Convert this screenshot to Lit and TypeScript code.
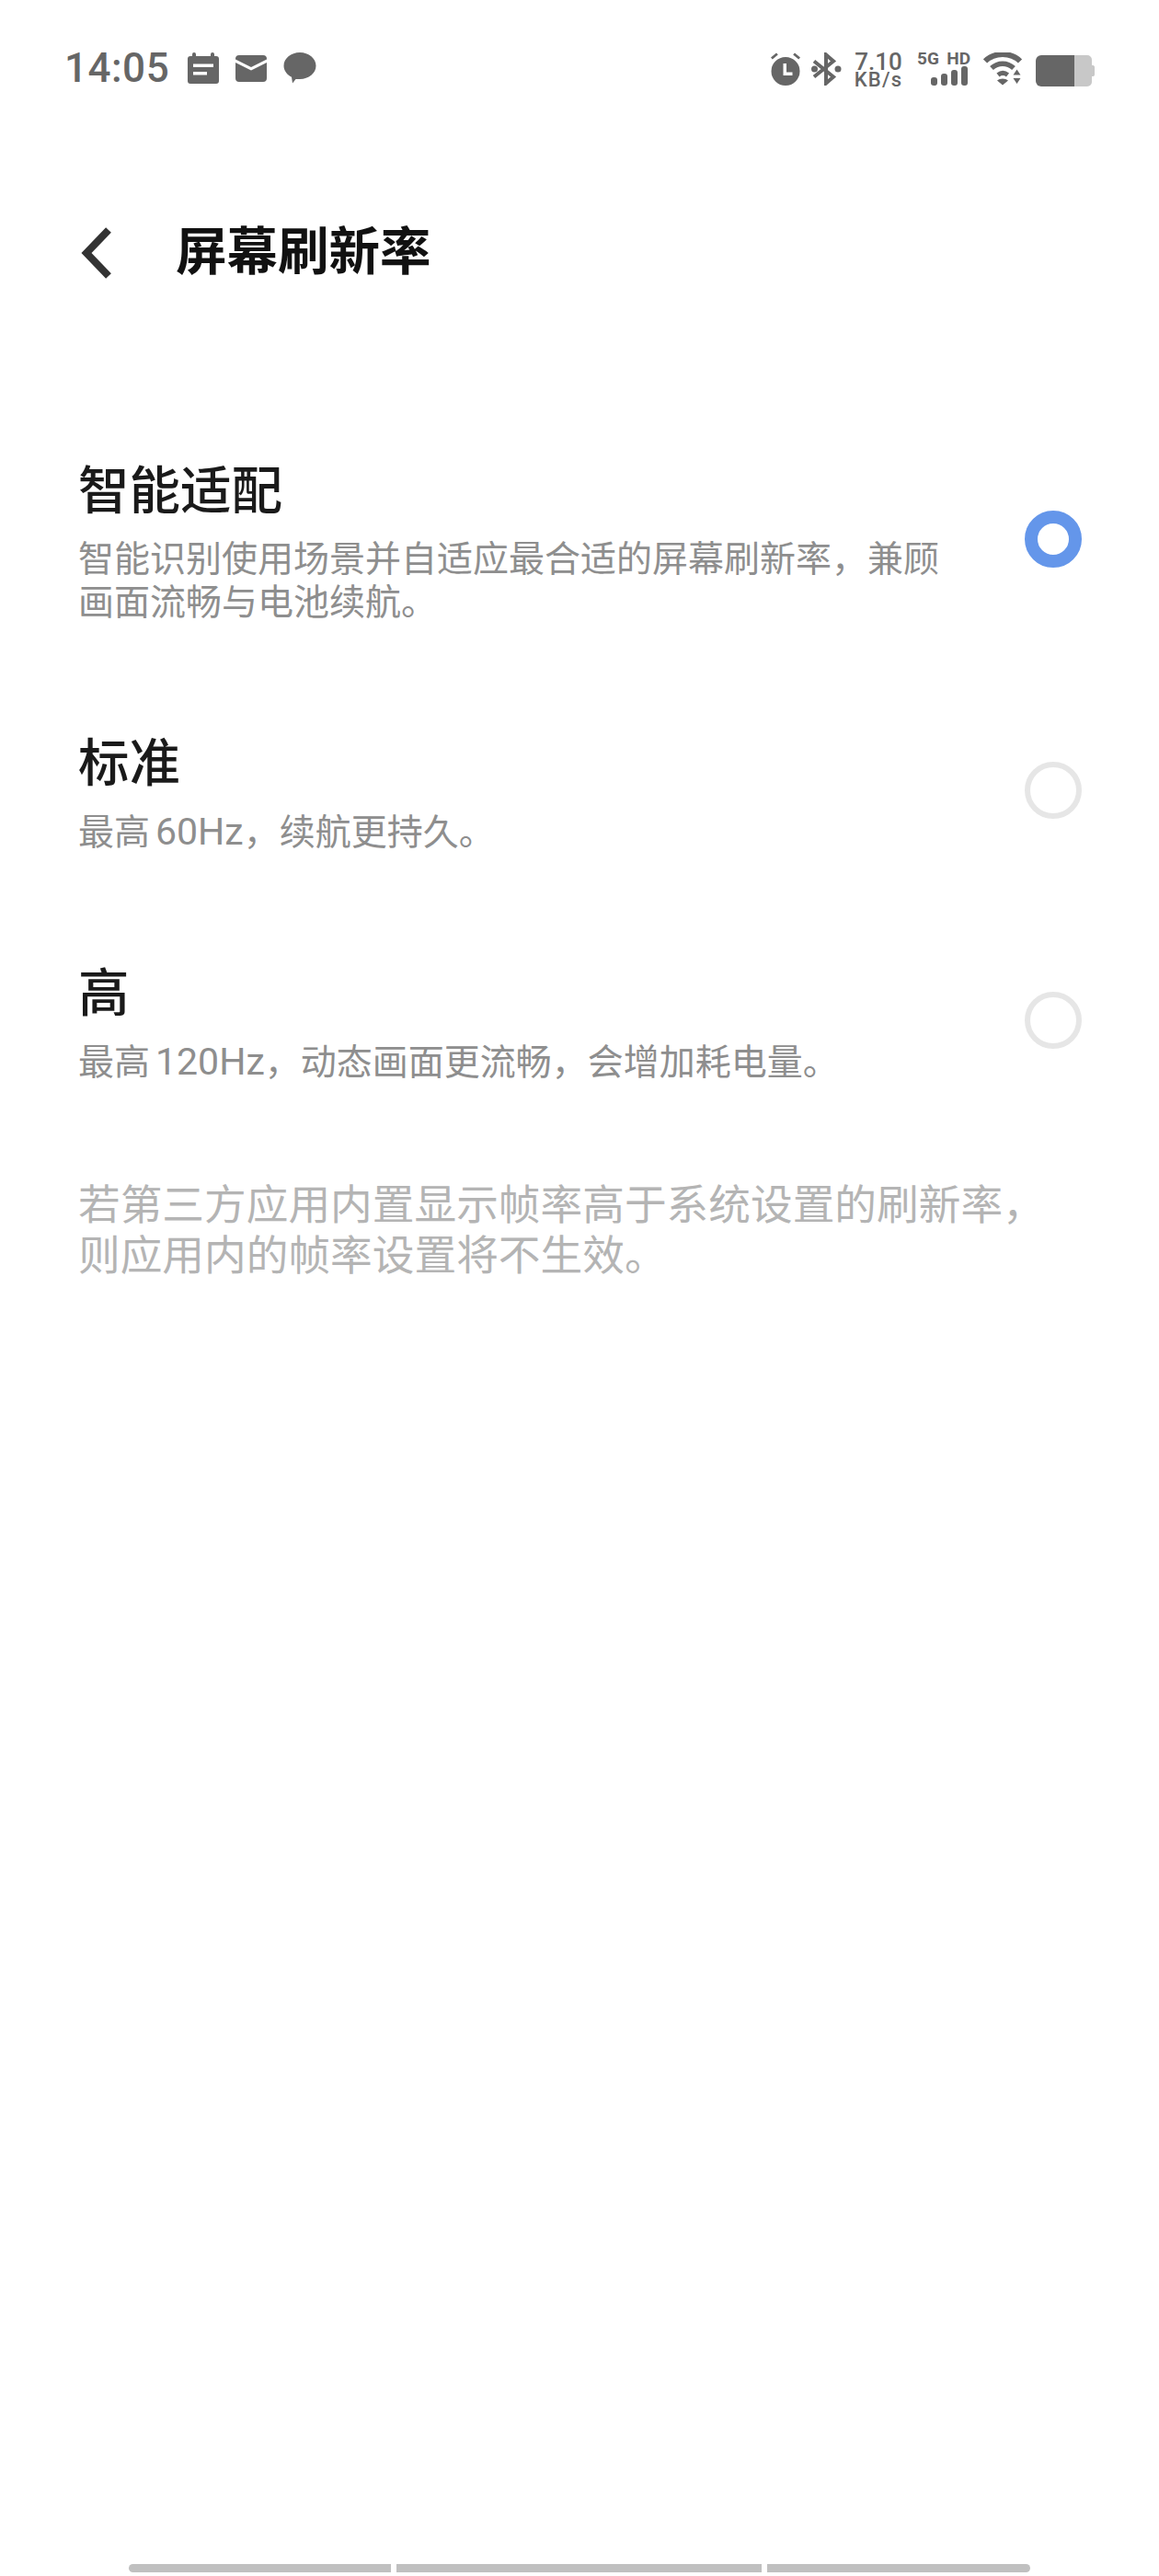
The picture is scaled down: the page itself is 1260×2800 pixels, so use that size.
import { LitElement, html, css } from "lit";
import { customElement } from "lit/decorators.js";

const lat = (t: string) => html`<span class="lat">${t}</span>`;

const options = [
  { title: "智能适配", desc: [html`智能识别使用场景并自适应最合适的屏幕刷新率，兼顾`, html`画面流畅与电池续航。`], on: true },
  { title: "标准", desc: [html`最高${lat("60Hz")}，续航更持久。`], on: false },
  { title: "高", desc: [html`最高${lat("120Hz")}，动态画面更流畅，会增加耗电量。`], on: false },
];

@customElement("app-root")
export class AppRoot extends LitElement {
  static styles = css`
    :host { display: block; background: #fff; font-family: Roboto, "Noto Sans CJK SC", sans-serif; }
    .page { min-height: 2800px; display: flex; flex-direction: column; box-sizing: border-box; }
    .status { display: flex; align-items: flex-start; height: 100px; box-sizing: border-box; padding: 57px 70px 0 70px; color: #666; }
    .time { font-size: 44px; font-weight: 500; line-height: 34px; letter-spacing: 0.5px; width: 133px; }
    .status svg { display: block; flex: none; fill: #666; }
    .left { display: flex; gap: 16px; }
    .spacer { flex: 1; }
    .speed { width: 50px; margin-left: 15px; display: flex; flex-direction: column; font-weight: 500; align-items: center; }
    .speed b { font-weight: 500; font-size: 26px; line-height: 20px; }
    .speed i { font-style: normal; font-size: 22px; line-height: 19px; letter-spacing: 1.2px; white-space: nowrap; }
    .net { width: 58px; margin-left: 17px; display: flex; flex-direction: column; }
    .net-t { display: flex; justify-content: space-between; font-weight: 700; font-size: 19px; line-height: 14px; height: 15px; }
    .header { display: flex; align-items: center; height: 94px; margin-top: 128px; padding-left: 87px; }
    .back { display: block; flex: none; }
    .title { margin-left: 68px; font-size: 55.500px; font-weight: 700; line-height: 94px; color: #111; }
    .list { display: flex; flex-direction: column; gap: 111px; margin-top: 178px; padding: 0 84px 0 85px; }
    .row { display: flex; align-items: center; }
    .text { flex: 1; display: flex; flex-direction: column; gap: 15px; padding-bottom: 6px; }
    .opt { font-size: 55.500px; line-height: 70px; font-weight: 500; color: #1a1a1a; }
    .desc { font-size: 39px; line-height: 47px; color: #8e8e8e; }
    .lat { font-size: 41px; font-weight: 400; margin-left: 6px; }
    .radio { flex: none; width: 62px; height: 62px; margin-bottom: 14px; border-radius: 50%; box-sizing: border-box; border: 6px solid #e6e6e6; }
    .radio.on { border: 14px solid #6496ea; }
    .note { margin: 98px 0 0 85px; font-size: 45.700px; line-height: 55px; color: #b4b4b4; }
    .nav { margin-top: auto; display: flex; gap: 6px; padding: 0 140px 4px; height: 9px; }
    .nav div { background: #c0c0c0; height: 9px; }
    .nav .a { width: 285px; border-radius: 5px 0 0 5px; }
    .nav .b { width: 397px; }
    .nav .c { width: 286px; border-radius: 0 5px 5px 0; }
  `;

  private statusLeft() {
    return html`<div class="left">
      <svg width="36" height="34" viewBox="0 0 36 34"><path fill-rule="evenodd" d="M8 0a2 2 0 0 1 2 2v2h16V2a2 2 0 0 1 4 0v2h2a3 3 0 0 1 3 3v24a3 3 0 0 1-3 3H4a3 3 0 0 1-3-3V7a3 3 0 0 1 3-3h2V2a2 2 0 0 1 2-2zM7 12.500v3.500h22v-3.500zM7 21v3.500h15V21z"/></svg>
      <svg width="36" height="34" viewBox="0 0 36 34" style="margin-top:2px"><path d="M5 1h26a4 4 0 0 1 4 4v.5L18 14 1 5.500V5a4 4 0 0 1 4-4zM1 9l17 8.500L35 9v17a4 4 0 0 1-4 4H5a4 4 0 0 1-4-4z"/></svg>
      <svg width="36" height="34" viewBox="0 0 36 34" style="margin-left:1px"><path d="M18 0c9.700 0 17.500 6.500 17.500 14.500S27.700 29 18 29c-1.500 0-3 .2-4.500 0L10 33.500 9 26.800C4 24.200.5 19.700.5 14.500.5 6.500 8.300 0 18 0z"/></svg>
    </div>`;
  }

  private statusRight() {
    return html`
      <svg width="34" height="36" viewBox="0 0 34 36"><path fill-rule="evenodd" d="M17 5a15.500 15.500 0 1 1 0 31 15.500 15.500 0 0 1 0-31zM14.500 12v13h10v-3.500h-6.500V12z"/><path d="M1 5.500 7 .5l1.800 2-6 5zM33 5.500l-6-5-1.800 2 6 5z"/></svg>
      <svg width="33" height="36" viewBox="0 0 33 36" style="margin-left:11px"><path d="M3 9.500l21 17-8 7V2.500l8 7-21 17" fill="none" stroke="#666" stroke-width="4"/><circle cx="3.500" cy="18" r="3.500"/><circle cx="29" cy="18" r="3.500"/></svg>
      <div class="speed"><b>7.10</b><i>KB/s</i></div>
      <div class="net">
        <div class="net-t"><span>5G</span><span>HD</span></div>
        <svg width="58" height="22" viewBox="0 0 58 22"><rect x="15" y="12" width="7" height="9" rx="3"/><rect x="26" y="8" width="7" height="13" rx="3"/><rect x="37" y="4" width="7" height="17" rx="3"/><rect x="48" y="0" width="7" height="21" rx="3"/></svg>
      </div>
      <svg width="44" height="36" viewBox="0 0 44 36" style="margin-left:14px"><path d="M2 9.500C12-.5 30-.5 40 9.500" fill="none" stroke="#666" stroke-width="6"/><path d="M9 17c7-6.500 17-6.500 24 0" fill="none" stroke="#666" stroke-width="5.500"/><path d="M16 24.500c3.500-2.800 7-2.800 10.500 0" fill="none" stroke="#666" stroke-width="5"/><path d="M15 30.500c3-2.700 9-2.700 12 0l-6 5zM36.500 18.500l4 6h-8zM32.500 28h8l-4 6z"/></svg>
      <svg width="64" height="34" viewBox="0 0 64 34" style="margin-left:13px;margin-top:3px"><path d="M42 0h14a5 5 0 0 1 5 5v6h1.500a2 2 0 0 1 1.500 2v8a2 2 0 0 1-1.500 2H61v6a5 5 0 0 1-5 5H42z" fill="#c8c8c8"/><path d="M6 0h36v34H6a6 6 0 0 1-6-6V6a6 6 0 0 1 6-6z"/></svg>
    `;
  }

  render() {
    return html`<div class="page">
      <div class="status">
        <div class="time">14:05</div>
        ${this.statusLeft()}
        <div class="spacer"></div>
        ${this.statusRight()}
      </div>
      <div class="header">
        <svg class="back" width="36" height="58" viewBox="0 0 36 58"><path d="M31 4 7 29l24 25" fill="none" stroke="#333" stroke-width="8"/></svg>
        <div class="title">屏幕刷新率</div>
      </div>
      <div class="list">
        ${options.map(o => html`<div class="row">
          <div class="text">
            <div class="opt">${o.title}</div>
            <div class="desc">${o.desc.map(l => html`<div>${l}</div>`)}</div>
          </div>
          <div class="radio ${o.on ? "on" : ""}"></div>
        </div>`)}
      </div>
      <div class="note"><div>若第三方应用内置显示帧率高于系统设置的刷新率，</div><div>则应用内的帧率设置将不生效。</div></div>
      <div class="nav"><div class="a"></div><div class="b"></div><div class="c"></div></div>
    </div>`;
  }
}
